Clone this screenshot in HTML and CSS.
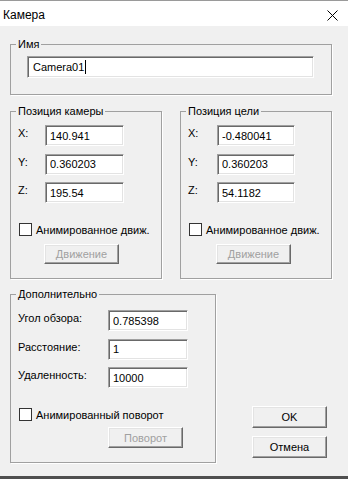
FILE: index.html
```html
<!DOCTYPE html>
<html>
<head>
<meta charset="utf-8">
	<title>Камера</title>
	<link rel="stylesheet" href="styles.css">
</head>
<body>
	<div class="window">
		<div class="titlebar">
			<span class="title">Камера</span>
			<svg class="close" width="11" height="11" viewBox="0 0 11 11">
				<path d="M0.5 0.5 L10.5 10.5 M10.5 0.5 L0.5 10.5" stroke="#000" stroke-width="1" fill="none"/>
			</svg>
		</div>
		<div class="dialog">
			<fieldset class="group nameGroup">
				<legend>Имя</legend>
				<div class="groupBody">
					<div class="field nameField">Camera01<span class="caret"></span></div>
				</div>
			</fieldset>

			<div class="posRow">
				<fieldset class="group posGroup">
					<legend>Позиция камеры</legend>
					<div class="groupBody">
						<div class="coords">
							<label>X:</label><input class="field" value="140.941">
							<label>Y:</label><input class="field" value="0.360203">
							<label>Z:</label><input class="field" value="195.54">
						</div>
						<label class="check"><input type="checkbox">Анимированное движ.</label>
						<button class="btn groupBtn" disabled>Движение</button>
					</div>
				</fieldset>
				<fieldset class="group posGroup target">
					<legend>Позиция цели</legend>
					<div class="groupBody">
						<div class="coords">
							<label>X:</label><input class="field" value="-0.480041">
							<label>Y:</label><input class="field" value="0.360203">
							<label>Z:</label><input class="field" value="54.1182">
						</div>
						<label class="check"><input type="checkbox">Анимированное движ.</label>
						<button class="btn groupBtn" disabled>Движение</button>
					</div>
				</fieldset>
			</div>

			<div class="bottomRow">
				<fieldset class="group extraGroup">
					<legend>Дополнительно</legend>
					<div class="groupBody">
						<div class="coords extra">
							<label>Угол обзора:</label><input class="field" value="0.785398">
							<label>Расстояние:</label><input class="field" value="1">
							<label>Удаленность:</label><input class="field" value="10000">
						</div>
						<label class="check"><input type="checkbox">Анимированный поворот</label>
						<button class="btn groupBtn extraBtn" disabled>Поворот</button>
					</div>
				</fieldset>
				<div class="actions">
					<button class="btn">OK</button>
					<button class="btn">Отмена</button>
				</div>
			</div>
		</div>
		<div class="taskbar"></div>
	</div>
</body>
</html>
```

FILE: styles.css
```css
body{
	margin: 0px;
	padding: 0px;
	background-color: #f0f0f0;
	font-family: "Liberation Sans", Arial, sans-serif;
	font-size: 11px;
	color: #000;
}
.window{
	width: 348px;
	height: 479px;
	display: flex;
	flex-direction: column;
	overflow: hidden;
}
.titlebar{
	height: 25px;
	border-top: 1px solid #9a9a9a;
	background-color: #fff;
	display: flex;
	align-items: center;
	justify-content: space-between;
	padding: 0 10px 0 3px;
}
.title{
	font-size: 12px;
	padding-top: 3px;
}
.close{
	display: block;
	margin-top: 3px;
}
.dialog{
	flex: 1;
	padding: 12px 16px 0 10px;
}
.taskbar{
	height: 3px;
	background-color: #4f4f4f;
}

/* group boxes */
.group{
	margin: 0px;
	padding: 0px;
	border: 1px solid #a0a0a0;
	box-shadow: 1px 1px 0 #fff;
	min-width: 0;
}
.group legend{
	margin-left: 5px;
	padding: 0 2px;
	line-height: 13px;
}
.groupBody{
	display: flex;
	flex-direction: column;
	align-items: flex-start;
}
.nameGroup .groupBody{
	padding: 5px 17px 16px 16px;
	align-items: stretch;
}

/* text fields */
.field{
	box-sizing: border-box;
	height: 21px;
	margin: 0px;
	padding: 0 0 0 4px;
	font-family: "Liberation Sans", Arial, sans-serif;
	font-size: 11px;
	color: #000;
	background-color: #fff;
	border: 1px solid;
	border-color: #a0a0a0 #fff #fff #a0a0a0;
	box-shadow: inset 1px 1px 0 #696969, inset -1px -1px 0 #e3e3e3;
	outline: none;
}
.nameField{
	height: 22px;
	display: flex;
	align-items: center;
	padding-left: 5px;
	font-size: 11px;
}
.caret{
	display: inline-block;
	width: 1px;
	height: 14px;
	background-color: #000;
	margin-left: 1px;
}

.posRow{
	display: flex;
	gap: 18px;
	margin-top: 10px;
}
.posGroup{
	width: 152px;
	box-sizing: border-box;
}
.posGroup .groupBody{
	padding: 7px 7px 14px 7px;
}
.coords{
	display: grid;
	grid-template-columns: 27px 79px;
	row-gap: 7.5px;
	align-items: start;
}
.target .coords{
	grid-template-columns: 29px 78px;
}
.coords label{
	padding-top: 2px;
	white-space: nowrap;
}
.coords.extra{
	grid-template-columns: 90px 80px;
}

/* checkbox */
.check{
	display: flex;
	align-items: center;
	gap: 4px;
	margin: 20px 0 0 1px;
	white-space: nowrap;
}
.check input{
	appearance: none;
	-webkit-appearance: none;
	width: 13px;
	height: 13px;
	margin: 0px;
	border: 1px solid #333;
	background-color: #fff;
}

/* buttons */
.btn{
	box-sizing: border-box;
	width: 75px;
	height: 22px;
	margin: 0px;
	padding: 0px;
	font-family: "Liberation Sans", Arial, sans-serif;
	font-size: 11px;
	font-weight: normal;
	color: #000;
	background-color: #f0f0f0;
	border: 1px solid;
	border-color: #fff #696969 #696969 #fff;
	box-shadow: inset -1px -1px 0 #a0a0a0, inset 1px 1px 0 #e3e3e3;
}
.btn:disabled{
	color: #a0a0a0;
}
.groupBtn{
	height: 20px;
	margin: 8px 0 0 26px;
}
.target .groupBtn{
	margin-left: 28px;
}

.bottomRow{
	display: flex;
	margin-top: 9px;
}
.extraGroup{
	width: 206px;
	box-sizing: border-box;
}
.extraGroup .groupBody{
	padding: 9px 7px 14px 7px;
}
.extraBtn{
	height: 21px;
	margin: 6px 0 0 90px;
}
.actions{
	margin-left: auto;
	margin-right: 5px;
	display: flex;
	flex-direction: column;
	justify-content: flex-end;
	gap: 8px;
	padding-bottom: 5px;
}
```
